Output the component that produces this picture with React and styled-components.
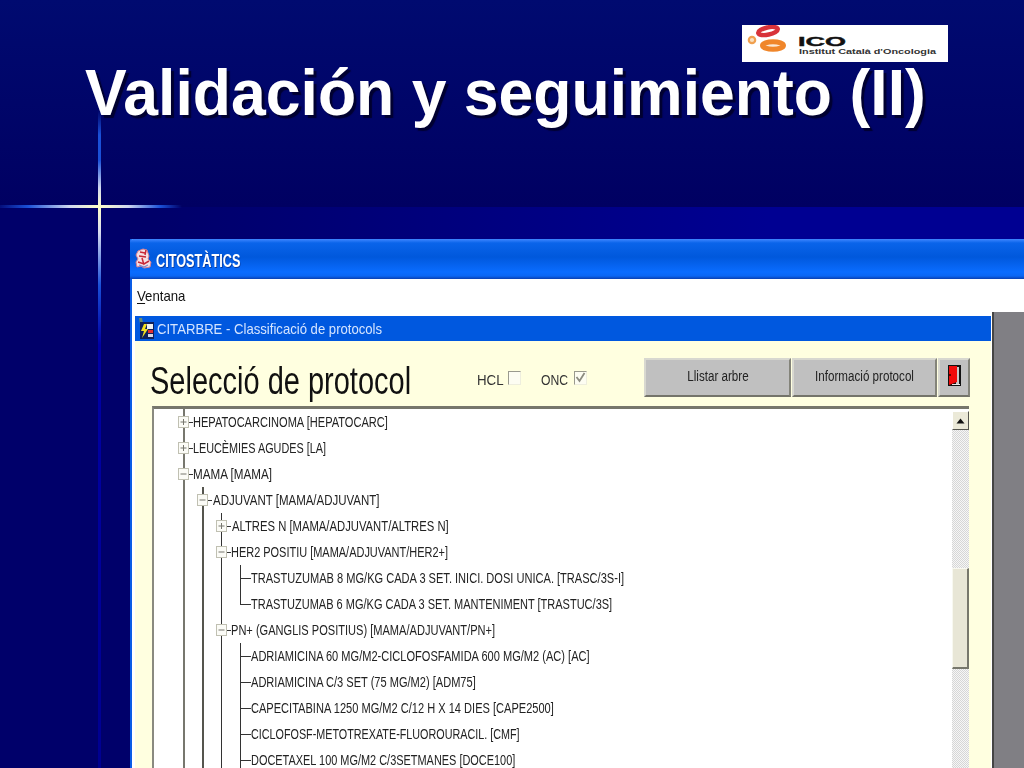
import React from "react";
import styled, { createGlobalStyle } from "styled-components";

const GlobalStyle = createGlobalStyle`
  html, body { margin: 0; padding: 0; background: #000066; }
  body { font-family: "Liberation Sans", Arial, sans-serif; }
`;

const Slide = styled.div`
  position: relative;
  width: 1024px;
  height: 768px;
  overflow: hidden;
  background:
    linear-gradient(90deg, #00006a 15%, #000092 75%) no-repeat 0 207px / 100% 561px,
    linear-gradient(#000a70, #000062 207px);
`;

const FlareV = styled.div`
  position: absolute;
  left: 98px;
  top: 110px;
  width: 3px;
  height: 658px;
  filter: blur(0.6px);
  background: linear-gradient(
    rgba(20, 70, 220, 0) 0,
    #1a50d8 25px,
    #1a50d8 50px,
    #d0d8f0 78px,
    #ffffc8 97px,
    #d8dcf0 122px,
    #1a50d8 175px,
    #0000a4 235px,
    #000090 658px
  );
`;

const FlareH = styled.div`
  position: absolute;
  left: 0;
  top: 205px;
  width: 182px;
  height: 3px;
  filter: blur(0.6px);
  background: linear-gradient(
    90deg,
    rgba(20, 70, 220, 0.2) 0,
    #1a50d8 28px,
    #d0d8f0 70px,
    #ffffc8 99px,
    #d0d8f0 128px,
    #1a50d8 160px,
    rgba(20, 70, 220, 0) 182px
  );
`;

const Header = styled.header`
  position: relative;
  display: flex;
  flex-direction: column;
  height: 239px;
  padding-top: 25px;
  box-sizing: border-box;
`;

const Logo = styled.svg`
  display: block;
  align-self: flex-end;
  margin-right: 76px;
  background: #fff;
`;

const Title = styled.h1`
  margin: -1px 0 0 85px;
  font-size: 64px;
  line-height: 64px;
  font-weight: 700;
  color: #fff;
  white-space: nowrap;
  text-shadow: 3px 3px 1px #000030;
  transform-origin: left;
  transform: scaleX(0.977);
`;

const Win = styled.div`
  position: relative;
  margin-left: 130px;
  width: 900px;
  height: 529px;
  display: flex;
  flex-direction: column;
  background: #fff;
  border-left: 2px solid #0a5ce6;
  box-sizing: border-box;
`;

const TitleBar = styled.div`
  height: 40px;
  flex: none;
  margin-left: -2px;
  display: flex;
  align-items: center;
  gap: 4px;
  padding-left: 5px;
  border-radius: 3px 0 0 0;
  background: linear-gradient(#3f86ff 0, #0a64ea 4px, #0058dc 18px, #0a6cff 33px, #0a66f4 37px, #0a3fb0 40px);
`;

const TitleText = styled.span`
  margin-top: 5px;
  font-size: 18px;
  font-weight: 700;
  color: #fff;
  text-shadow: 1px 1px 0 #0a3a9c;
  white-space: nowrap;
  transform-origin: left;
  transform: scaleX(0.705);
`;

const MenuBar = styled.div`
  height: 33px;
  flex: none;
  display: flex;
  align-items: center;
  padding-left: 5px;
  font-size: 15px;
  color: #111;
`;

const MenuItem = styled.span`
  display: inline-block;
  transform-origin: left;
  transform: scaleX(0.88);
  u { text-underline-offset: 2px; }
`;

const Client = styled.div`
  flex: 1;
  min-height: 0;
  display: flex;
`;

const ChildArea = styled.div`
  width: 860px;
  flex: none;
  padding: 4px 1px 0 3px;
  box-sizing: border-box;
  display: flex;
  flex-direction: column;
`;

const GreyPanel = styled.div`
  flex: 1;
  background: #807f84;
  border-left: 2px solid #444;
`;

const ChildBar = styled.div`
  height: 25px;
  flex: none;
  display: flex;
  align-items: center;
  gap: 2px;
  padding-left: 1px;
  background: #0058df;
`;

const ChildTitle = styled.span`
  font-size: 14.5px;
  color: #d4e4ff;
  white-space: nowrap;
  transform-origin: left;
  transform: scaleX(0.905);
`;

const ChildBody = styled.div`
  flex: 1;
  min-height: 0;
  display: flex;
  flex-direction: column;
  background: #ffffe0;
  padding-left: 17px;
`;

const Toolbar = styled.div`
  height: 65px;
  flex: none;
  display: flex;
  align-items: flex-start;
`;

const Heading = styled.div`
  width: 327px;
  flex: none;
  margin: 17px 0 0 -2px;
  font-size: 38px;
  line-height: 46px;
  color: #111;
  white-space: nowrap;
  transform-origin: left;
  transform: scaleX(0.763);
`;

const CheckGroup = styled.label`
  display: flex;
  align-items: center;
  gap: 3px;
  margin-top: 29px;
  margin-right: ${(p) => p.$gap}px;
  font-size: 14px;
  line-height: 20px;
  color: #333;
`;

const CheckText = styled.span`
  width: ${(p) => p.$w}px;
  white-space: nowrap;
  transform-origin: left;
  transform: scaleX(${(p) => p.$x});
`;

const CheckBox = styled.span`
  width: 13px;
  height: 14px;
  margin-top: -5px;
  box-sizing: border-box;
  background: #fdfdf2;
  border: 1px solid;
  border-color: #9a9a8e #eeeede #eeeede #9a9a8e;
  display: flex;
  align-items: center;
  justify-content: center;
`;

const Buttons = styled.div`
  display: flex;
  gap: 1px;
  margin-top: 17px;
`;

const Button = styled.button`
  width: ${(p) => p.$w}px;
  height: 39px;
  padding: 0 0 4px;
  display: flex;
  align-items: center;
  justify-content: center;
  background: #c0c0c0;
  border: 2px solid;
  border-color: #d8d8d0 #84847a #74746a #d8d8d0;
  font-family: inherit;
  font-size: 14px;
  color: #222;
  white-space: nowrap;
`;

const ButtonText = styled.span`
  transform: scaleX(0.83);
`;

const TreeBox = styled.div`
  flex: 1;
  min-height: 0;
  width: 817px;
  display: flex;
  background: #fff;
  border-top: 3px solid #77776c;
  border-left: 2px solid #8a8a80;
  box-sizing: border-box;
  overflow: hidden;
`;

const TreeList = styled.div`
  flex: 1;
  padding-left: 29px;
`;

const Row = styled.div`
  height: 26px;
  display: flex;
  align-items: stretch;
`;

const Guide = styled.span`
  width: 19px;
  flex: none;
  background: linear-gradient(${(p) => p.$tone}, ${(p) => p.$tone}) no-repeat left top / ${(p) => p.$size}px 100%;
`;

const Elbow = styled.span`
  width: 11px;
  flex: none;
  background:
    linear-gradient(#333, #333) no-repeat left top / 1px ${(p) => (p.$last ? "50%" : "100%")},
    linear-gradient(#333, #333) no-repeat left 50% / 100% 1px;
`;

const Joint = styled.span`
  position: relative;
  width: 10px;
  flex: none;
  background:
    linear-gradient(${(p) => p.$tone}, ${(p) => p.$tone}) no-repeat left top / ${(p) => p.$size}px 100%,
    linear-gradient(#333, #333) no-repeat 6px 50% / 4px 1px;
`;

const Expander = styled.svg`
  position: absolute;
  left: -5px;
  top: 7px;
`;

const Label = styled.span`
  align-self: center;
  margin-left: ${(p) => p.$pad || 0}px;
  font-size: 14px;
  line-height: 16px;
  color: #222;
  white-space: nowrap;
  transform-origin: left;
  transform: scaleX(${(p) => p.$x || 0.79});
`;

const ScrollBar = styled.div`
  width: 17px;
  flex: none;
  margin-top: 2px;
  display: flex;
  flex-direction: column;
  background: repeating-conic-gradient(#d6d6d6 0 25%, #f6f6f6 0 50%) 0 0 / 2px 2px;
`;

const ScrollArrow = styled.div`
  height: 19px;
  flex: none;
  display: flex;
  align-items: center;
  justify-content: center;
  background: #ebe9d8;
  border: 1px solid;
  border-color: #fff #55554e #55554e #fff;
  box-sizing: border-box;
`;

const ScrollThumb = styled.div`
  height: 101px;
  flex: none;
  margin-top: 138px;
  box-sizing: border-box;
  background: #e8e6d6;
  border: 1px solid;
  border-color: #f8f8f0 #77776c #77776c #f8f8f0;
  border-width: 1px 2px 2px 1px;
`;

const guideStyle = [
  { tone: "#77776e", size: 2 },
  { tone: "#55554e", size: 2 },
  { tone: "#333", size: 1 },
];

const rows = [
  { depth: 0, kind: "plus", text: "HEPATOCARCINOMA [HEPATOCARC]" },
  { depth: 0, kind: "plus", x: 0.773, text: "LEUCÈMIES AGUDES [LA]" },
  { depth: 0, kind: "minus", x: 0.832, text: "MAMA [MAMA]" },
  { depth: 1, kind: "minus", pad: 1, x: 0.82, text: "ADJUVANT [MAMA/ADJUVANT]" },
  { depth: 2, kind: "plus", pad: 1, x: 0.805, text: "ALTRES N [MAMA/ADJUVANT/ALTRES N]" },
  { depth: 2, kind: "minus", x: 0.783, text: "HER2 POSITIU [MAMA/ADJUVANT/HER2+]" },
  { depth: 3, text: "TRASTUZUMAB 8 MG/KG CADA 3 SET. INICI. DOSI UNICA. [TRASC/3S-I]" },
  { depth: 3, last: true, x: 0.786, text: "TRASTUZUMAB 6 MG/KG CADA 3 SET. MANTENIMENT [TRASTUC/3S]" },
  { depth: 2, kind: "minus", text: "PN+ (GANGLIS POSITIUS) [MAMA/ADJUVANT/PN+]" },
  { depth: 3, text: "ADRIAMICINA 60 MG/M2-CICLOFOSFAMIDA 600 MG/M2 (AC) [AC]" },
  { depth: 3, text: "ADRIAMICINA C/3 SET (75 MG/M2) [ADM75]" },
  { depth: 3, text: "CAPECITABINA 1250 MG/M2 C/12 H X 14 DIES [CAPE2500]" },
  { depth: 3, x: 0.77, text: "CICLOFOSF-METOTREXATE-FLUOROURACIL. [CMF]" },
  { depth: 3, x: 0.781, text: "DOCETAXEL 100 MG/M2 C/3SETMANES [DOCE100]" },
];

const ExpanderIcon = ({ kind }) => (
  <Expander width="11" height="12" viewBox="0 0 11 12">
    <rect x="0.5" y="0.5" width="10" height="11" fill="#fbfbf6" stroke="#c0c0b2" />
    <path d="M2.5 6h6" stroke="#77776e" />
    {kind === "plus" && <path d="M5.5 3v6" stroke="#77776e" />}
  </Expander>
);

const TreeRow = ({ row }) => (
  <Row>
    {Array.from({ length: row.depth }).map((_, i) => (
      <Guide key={i} $tone={guideStyle[i].tone} $size={guideStyle[i].size} />
    ))}
    {row.kind ? (
      <Joint $tone={guideStyle[row.depth].tone} $size={guideStyle[row.depth].size}>
        <ExpanderIcon kind={row.kind} />
      </Joint>
    ) : (
      <Elbow $last={row.last} />
    )}
    <Label $pad={row.pad} $x={row.x}>{row.text}</Label>
  </Row>
);

const IcoLogo = () => (
  <Logo width="206" height="37" viewBox="0 0 206 37">
    <ellipse cx="26" cy="6" rx="10" ry="3.6" fill="none" stroke="#d8333a" strokeWidth="4.4" transform="rotate(-12 26 6)" />
    <circle cx="10" cy="15" r="3.2" fill="#f8e0c0" stroke="#f0a050" strokeWidth="2.2" />
    <ellipse cx="31" cy="20.5" rx="10.5" ry="3.8" fill="#fbe8d4" stroke="#f0862a" strokeWidth="5" />
    <text x="56" y="21" fontFamily="Liberation Sans" fontWeight="700" fontSize="13" textLength="48" lengthAdjust="spacingAndGlyphs" fill="#111" stroke="#111" strokeWidth="0.4">ICO</text>
    <text x="57" y="29" fontFamily="Liberation Sans" fontWeight="700" fontSize="7" textLength="137" lengthAdjust="spacingAndGlyphs" fill="#333">Institut Català d'Oncologia</text>
  </Logo>
);

const AppIcon = () => (
  <svg width="17" height="22" viewBox="0 0 17 22">
    <path d="M3 3l5-2 4 1 2 6-1 3 3 3-1 5-6 1-3-2-4 1-1-5 2-3-2-4z" fill="#f4e0e4" stroke="#d88090" />
    <path d="M5 4l5 1M4 8l7 1M3 14l6 2 5-3M7 10l2 7M11 2l-1 5" stroke="#c82838" strokeWidth="1.5" fill="none" />
    <path d="M4 17l5 2 4-2" stroke="#8088c8" strokeWidth="1.2" fill="none" />
  </svg>
);

const TreeIcon = () => (
  <svg width="19" height="23" viewBox="0 0 19 23">
    <path d="M3 1l3 0 1 5-3 1z" fill="#6a8a70" />
    <rect x="4" y="5" width="14" height="17" fill="#10205a" />
    <path d="M8 7l-3 7h3l-2 7 6-9H9l2-5z" fill="#f4e020" />
    <rect x="11" y="7" width="6" height="5" fill="#f0f0f0" />
    <rect x="12" y="13" width="5" height="3" fill="#e03030" />
    <rect x="12" y="17" width="5" height="3" fill="#d8d8e8" />
  </svg>
);

const DoorIcon = () => (
  <svg width="13" height="21" viewBox="0 0 13 21">
    <rect x="0" y="0" width="13" height="21" fill="#111" />
    <rect x="8" y="2" width="3" height="17" fill="#c8c8c8" />
    <path d="M1 1h8v16l-8 3z" fill="#f00a0a" />
    <rect x="1" y="9" width="2" height="2" fill="#600" />
    <rect x="4" y="19" width="8" height="1" fill="#e8e8e8" />
  </svg>
);

export default function App() {
  return (
    <>
      <GlobalStyle />
      <Slide>
        <Header>
          <IcoLogo />
          <Title>Validación y seguimiento (II)</Title>
        </Header>
        <Win>
          <TitleBar>
            <AppIcon />
            <TitleText>CITOSTÀTICS</TitleText>
          </TitleBar>
          <MenuBar>
            <MenuItem>
              <u>V</u>entana
            </MenuItem>
          </MenuBar>
          <Client>
            <ChildArea>
              <ChildBar>
                <TreeIcon />
                <ChildTitle>CITARBRE - Classificació de protocols</ChildTitle>
              </ChildBar>
              <ChildBody>
                <Toolbar>
                  <Heading>Selecció de protocol</Heading>
                  <CheckGroup $gap={20}>
                    <CheckText $w={28} $x={0.95}>HCL</CheckText>
                    <CheckBox />
                  </CheckGroup>
                  <CheckGroup $gap={57}>
                    <CheckText $w={30} $x={0.87}>ONC</CheckText>
                    <CheckBox>
                      <svg width="11" height="12" viewBox="0 0 11 12">
                        <path d="M1.5 5l3 4 5-8" fill="none" stroke="#8c8c80" strokeWidth="1.8" />
                      </svg>
                    </CheckBox>
                  </CheckGroup>
                  <Buttons>
                    <Button $w={147}>
                      <ButtonText>Llistar arbre</ButtonText>
                    </Button>
                    <Button $w={145}>
                      <ButtonText>Informació protocol</ButtonText>
                    </Button>
                    <Button $w={32}>
                      <DoorIcon />
                    </Button>
                  </Buttons>
                </Toolbar>
                <TreeBox>
                  <TreeList>
                    {rows.map((row) => (
                      <TreeRow key={row.text} row={row} />
                    ))}
                  </TreeList>
                  <ScrollBar>
                    <ScrollArrow>
                      <svg width="9" height="6" viewBox="0 0 9 6">
                        <path d="M4.5 0.5L8.5 5.5H0.5z" fill="#111" />
                      </svg>
                    </ScrollArrow>
                    <ScrollThumb />
                  </ScrollBar>
                </TreeBox>
              </ChildBody>
            </ChildArea>
            <GreyPanel />
          </Client>
        </Win>
        <FlareV />
        <FlareH />
      </Slide>
    </>
  );
}
